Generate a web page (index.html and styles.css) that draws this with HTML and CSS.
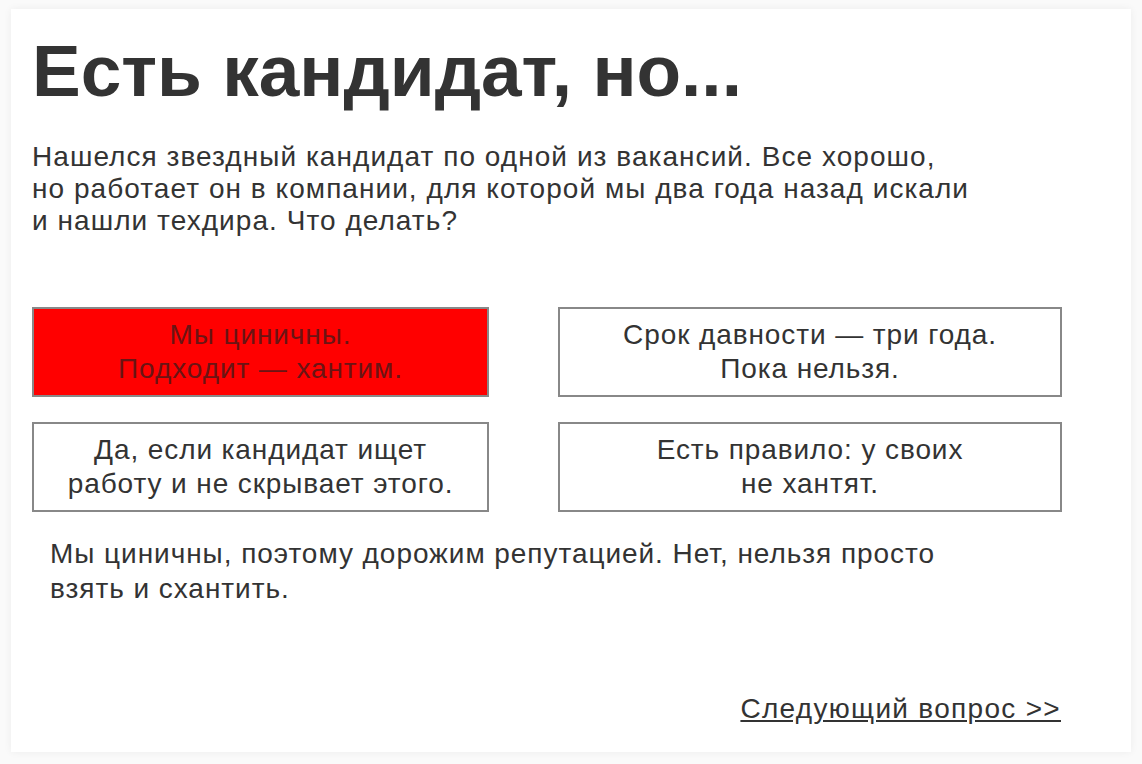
FILE: index.html
```html
<!DOCTYPE html>
<html lang="ru">
<head>
<meta charset="utf-8">
<link rel="stylesheet" href="styles.css">
</head>
<body>
<div class="card">
  <h1 class="title">Есть кандидат, но...</h1>
  <p class="question">Нашелся звездный кандидат по одной из вакансий. Все хорошо,<br>но работает он в компании, для которой мы два года назад искали<br>и нашли техдира. Что делать?</p>
  <div class="answers">
    <div class="answer selected">Мы циничны.<br>Подходит — хантим.</div>
    <div class="answer">Срок давности — три года.<br>Пока нельзя.</div>
    <div class="answer">Да, если кандидат ищет<br>работу и не скрывает этого.</div>
    <div class="answer">Есть правило: у своих<br>не хантят.</div>
  </div>
  <p class="result">Мы циничны, поэтому дорожим репутацией. Нет, нельзя просто<br>взять и схантить.</p>
  <div class="footer"><a class="next" href="#">Следующий вопрос &gt;&gt;</a></div>
</div>
</body>
</html>
```
FILE: styles.css
```css
html, body {
  margin: 0;
  padding: 0;
}
body {
  background: #fafafa;
  font-family: "Liberation Sans", Arial, sans-serif;
  color: #333;
  width: 1142px;
  height: 764px;
  overflow: hidden;
}
.card {
  margin: 9px 0 0 11px;
  width: 1120px;
  height: 743px;
  box-sizing: border-box;
  background: #fff;
  box-shadow: 0 0 8px rgba(0, 0, 0, 0.06);
  padding: 20px 21px 0 21px;
  display: flex;
  flex-direction: column;
}
.title {
  margin: 0;
  font-size: 73px;
  font-weight: bold;
  line-height: 84px;
  color: #333;
}
.question {
  margin: 28px 0 0 0;
  font-size: 28px;
  line-height: 32px;
  letter-spacing: 1.05px;
}
.answers {
  margin-top: 70px;
  display: grid;
  grid-template-columns: 457px 504px;
  column-gap: 69px;
  row-gap: 25px;
}
.answer {
  height: 90px;
  box-sizing: border-box;
  border: 2px solid #888;
  display: flex;
  align-items: center;
  justify-content: center;
  text-align: center;
  font-size: 28px;
  line-height: 34px;
  letter-spacing: 0.9px;
  background: #fff;
}
.answer.selected {
  background: #ff0000;
  color: #6a1414;
}
.result {
  margin: 24px 0 0 18px;
  font-size: 28px;
  line-height: 35px;
  letter-spacing: 0.95px;
}
.footer {
  margin-top: auto;
  margin-bottom: 22px;
  width: 1029px;
  text-align: right;
  line-height: 34px;
}
.next {
  color: #333;
  font-size: 28px;
  line-height: 34px;
  letter-spacing: 1.3px;
  text-decoration: underline;
}
```
